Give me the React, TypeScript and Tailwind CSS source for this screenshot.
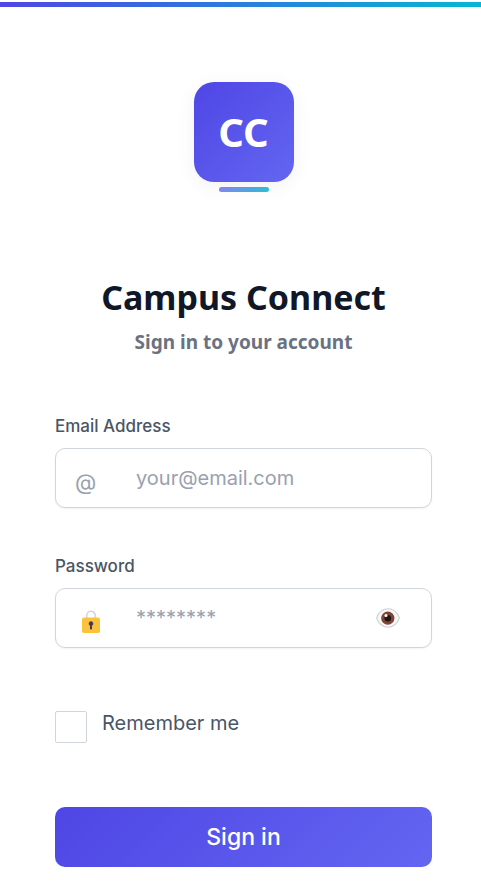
import { useState } from "react";

function LockIcon() {
  return (
    <svg viewBox="0 0 18 24" className="h-6 w-[18px]" aria-hidden="true">
      <path d="M4.700 9V5.600a4.300 4.300 0 0 1 8.600 0V9" fill="none" stroke="#d3d5da" strokeWidth="1.600" />
      <rect x="0" y="7.500" width="18" height="15.500" rx="2" fill="#fbc23c" />
      <path
        d="M9 11.300a2.300 2.300 0 0 0-1.400 4.100h.4v3.300c0 .4.300.7.700.7h.6c.4 0 .7-.3.7-.7v-3.300h.4A2.300 2.300 0 0 0 9 11.300z"
        fill="#433b5b"
      />
    </svg>
  );
}

function EyeIcon() {
  return (
    <svg viewBox="0 0 24 20" className="h-5 w-6" aria-hidden="true">
      <path
        d="M.6 10C2.800 4.200 7 .8 12 .8S21.200 4.200 23.400 10C21.200 15.800 17 19.200 12 19.200S2.800 15.800.6 10z"
        fill="#f8f8f8"
        stroke="#cfd1d3"
        strokeWidth="1.100"
      />
      <circle cx="11.800" cy="10.200" r="6.600" fill="#7d4533" />
      <circle cx="11.800" cy="10.200" r="3.300" fill="#1f1413" />
      <circle cx="10" cy="7.500" r="1.500" fill="#ffffff" />
    </svg>
  );
}

const fieldClass =
  "flex h-[60px] items-center rounded-[10px] border border-gray-300 bg-white shadow-xs";
const inputClass =
  "h-full min-w-0 flex-1 bg-transparent text-xl text-gray-700 outline-none placeholder:text-gray-400";

export default function App() {
  const [visible, setVisible] = useState(false);

  return (
    <main className="min-h-screen bg-white pt-[2px] font-['Inter',sans-serif]">
      <div className="h-[5px] bg-[linear-gradient(90deg,#4f46e5,#06b6d4)]" />

      <div className="pt-[75px] pr-[49px] pb-[14px] pl-[55px]">
        <header className="flex flex-col items-center font-['Noto_Sans',sans-serif]">
          <div className="flex size-[100px] items-center justify-center rounded-[20px] bg-[linear-gradient(135deg,#4f46e5,#6366f1)] text-[40px] font-bold text-white shadow-[0_4px_20px_rgba(0,0,0,0.06)]">
            CC
          </div>
          <div className="mt-[5px] h-[5px] w-[50px] rounded-full bg-[linear-gradient(90deg,#8286ee,#2bbdd6)]" />
          <h1 className="mt-20 text-[34px] leading-[50px] font-bold whitespace-nowrap text-gray-900">
            Campus Connect
          </h1>
          <p className="mt-[6px] text-[19px] leading-7 font-bold text-gray-500">
            Sign in to your account
          </p>
        </header>

        <form className="mt-[58px]" onSubmit={(event) => event.preventDefault()}>
          <label htmlFor="email" className="block text-[17px] leading-6 font-medium text-gray-600">
            Email Address
          </label>
          <div className={`mt-[10px] ${fieldClass}`}>
            <span className="w-20 pt-2 pl-[19px] text-[22px] leading-7 text-gray-400" aria-hidden="true">
              @
            </span>
            <input
              id="email"
              type="email"
              placeholder="your@email.com"
              className={inputClass}
            />
          </div>

          <label
            htmlFor="password"
            className="mt-[46px] block text-[17px] leading-6 font-medium text-gray-600"
          >
            Password
          </label>
          <div className={`mt-[10px] ${fieldClass}`}>
            <span className="w-20 pt-2 pl-[26px]">
              <LockIcon />
            </span>
            <input
              id="password"
              type={visible ? "text" : "password"}
              placeholder="********"
              className={inputClass}
            />
            <button
              type="button"
              aria-label="Show password"
              className="mr-[31px]"
              onClick={() => setVisible(!visible)}
            >
              <EyeIcon />
            </button>
          </div>

          <div className="mt-[63px] flex items-start gap-[15px]">
            <input
              id="remember"
              type="checkbox"
              className="size-8 appearance-none rounded-[2px] border border-gray-300 bg-white checked:bg-indigo-600"
            />
            <label htmlFor="remember" className="text-xl leading-6 text-gray-600">
              Remember me
            </label>
          </div>

          <button
            type="submit"
            className="mt-16 h-[60px] w-full rounded-[10px] bg-[linear-gradient(135deg,#4f46e5,#6366f1)] text-[23px] font-medium text-white"
          >
            Sign in
          </button>
        </form>
      </div>
    </main>
  );
}
